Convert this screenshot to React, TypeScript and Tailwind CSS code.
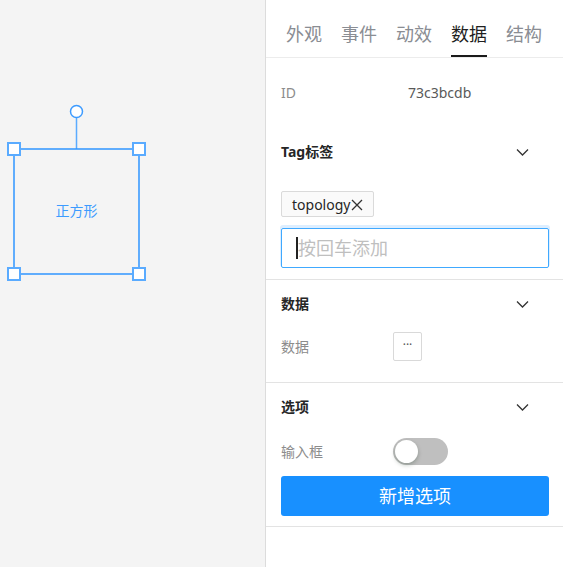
const font = { fontFamily: '"Noto Sans", "Noto Sans CJK SC", sans-serif' };

function Tabs() {
  const tabs = ["外观", "事件", "动效", "数据", "结构"];
  return (
    <div className="flex h-[58px] gap-[19px] border-b border-[#ececec] pl-[20px]">
      {tabs.map((t) => (
        <div
          key={t}
          className={
            "border-b-2 pt-[22px] pb-[9px] text-[18px] leading-6 " +
            (t === "数据" ? "border-[#1a1a1a] text-[#1f1f1f]" : "border-transparent text-[#8a8d93]")
          }
        >
          {t}
        </div>
      ))}
    </div>
  );
}

function SectionHeader({ title }: { title: string }) {
  return (
    <div className="flex h-[22px] w-[268px] items-center justify-between pr-[20px] text-[14px] font-bold leading-[22px] text-[#262626]">
      <span>{title}</span>
      <svg width="13" height="9" viewBox="0 0 13 9">
        <path d="M1 1.5L6.5 7L12 1.5" fill="none" stroke="#333" strokeWidth="1.3" />
      </svg>
    </div>
  );
}

function Canvas() {
  return (
    <div className="relative h-full w-[265px] bg-[#f4f4f4]">
      <svg className="absolute left-0 top-0" width="160" height="290">
        <line x1="76.5" y1="118" x2="76.5" y2="149" stroke="#5aabff" strokeWidth="1.5" />
        <circle cx="76.5" cy="111.5" r="6" fill="#fff" stroke="#3d9bff" strokeWidth="1.5" />
        <rect x="14" y="149" width="125" height="125" fill="none" stroke="#2f95ff" strokeWidth="1.5" />
        {[
          [14, 149],
          [139, 149],
          [14, 274],
          [139, 274],
        ].map(([x, y]) => (
          <rect key={x + "-" + y} x={x - 6} y={y - 6} width="12" height="12" fill="#fff" stroke="#5aabff" strokeWidth="2" />
        ))}
      </svg>
      <div className="absolute left-[14px] top-[200px] w-[125px] text-center text-[14px] leading-[22px] text-[#3d9bff]">
        正方形
      </div>
    </div>
  );
}

export default function App() {
  return (
    <div className="flex h-[567px] w-[563px] bg-white" style={font}>
      <Canvas />
      <div className="flex-1 border-l border-[#dcdcdc]">
        <Tabs />
        <div className="pl-[15px]">
          <div className="mt-[24px] flex h-[22px] items-center text-[14px] leading-[22px]">
            <span className="w-[127px] text-[#8c8c8c]">ID</span>
            <span className="text-[#595959]">73c3bcdb</span>
          </div>
          <div className="mt-[37px]">
            <SectionHeader title="Tag标签" />
          </div>
          <div className="mt-[28px] flex">
            <div className="flex h-[26px] items-center gap-[1px] rounded-[2px] border border-[#dadada] bg-[#fafafa] pl-[10px] pr-[10px] text-[14px] text-[#262626]">
              <span>topology</span>
              <svg width="12" height="12" viewBox="0 0 12 12" className="mt-[1px]">
                <path d="M1 1L11 11M11 1L1 11" stroke="#333" strokeWidth="1.3" />
              </svg>
            </div>
          </div>
          <div className="mt-[11px] flex h-[40px] w-[268px] items-center rounded-[2px] border border-[#40a9ff] pl-[14px] shadow-[0_-2px_0_1px_rgba(24,144,255,0.15)]">
            <span className="h-[22px] w-[2px] bg-[#222]" />
            <span className="text-[18px] text-[#bfbfbf]">按回车添加</span>
          </div>
        </div>
        <div className="mt-[11px] border-t border-[#e3e3e3] pl-[15px]">
          <div className="mt-[13px]">
            <SectionHeader title="数据" />
          </div>
          <div className="mt-[17px] flex items-center">
            <span className="w-[112px] text-[14px] leading-[22px] text-[#8c8c8c]">数据</span>
            <div className="flex h-[29px] w-[29px] items-center justify-center rounded-[2px] border border-[#d9d9d9] bg-white pb-[4px] text-[12px] text-[#555]">
              ···
            </div>
          </div>
        </div>
        <div className="mt-[21px] border-t border-[#e3e3e3] pl-[15px]">
          <div className="mt-[13px]">
            <SectionHeader title="选项" />
          </div>
          <div className="mt-[20px] flex items-center">
            <span className="w-[112px] text-[14px] leading-[22px] text-[#8c8c8c]">输入框</span>
            <div className="flex h-[27px] w-[55px] items-center rounded-full bg-[#bfbfbf] pl-[2px]">
              <div className="h-[23px] w-[23px] rounded-full bg-white shadow-[0_2px_4px_rgba(0,35,11,0.25)]" />
            </div>
          </div>
          <button className="mt-[11px] flex h-[40px] w-[268px] items-center justify-center rounded-[3px] bg-[#1890ff] text-[18px] text-white">
            新增选项
          </button>
        </div>
        <div className="mt-[10px] border-t border-[#e3e3e3]" />
      </div>
    </div>
  );
}
